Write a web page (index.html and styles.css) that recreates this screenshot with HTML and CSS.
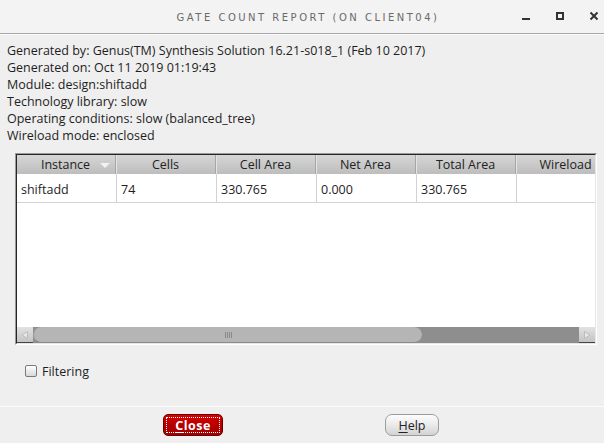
FILE: index.html
```html
<!DOCTYPE html>
<html>
<head>
<meta charset="utf-8">
<link rel="stylesheet" href="styles.css">
</head>
<body>
<div class="window">
  <div class="titlebar">
    <div class="title">Gate Count Report (on client04)</div>
    <div class="controls">
      <svg class="ctl" width="10" height="10" viewBox="0 0 10 10"><rect x="1" y="7" width="8" height="2" fill="#333"/></svg>
      <svg class="ctl" width="10" height="10" viewBox="0 0 10 10"><rect x="2" y="2" width="6" height="6" fill="none" stroke="#333" stroke-width="2"/></svg>
      <svg class="ctl" width="10" height="10" viewBox="0 0 10 10"><path d="M1.5 1.5 L8.5 8.5 M8.5 1.5 L1.5 8.5" stroke="#333" stroke-width="2"/></svg>
    </div>
  </div>
  <div class="info">
    <div>Generated by: Genus(TM) Synthesis Solution 16.21-s018_1 (Feb 10 2017)</div>
    <div>Generated on: Oct 11 2019 01:19:43</div>
    <div>Module: design:shiftadd</div>
    <div>Technology library: slow</div>
    <div>Operating conditions: slow (balanced_tree)</div>
    <div>Wireload mode: enclosed</div>
  </div>
  <div class="frame">
    <div class="frame-inner">
      <div class="viewport">
        <div class="grid">
          <div class="th sorted">Instance<span class="arrow"></span></div>
          <div class="th">Cells</div>
          <div class="th">Cell Area</div>
          <div class="th">Net Area</div>
          <div class="th">Total Area</div>
          <div class="th">Wireload</div>
          <div class="td">shiftadd</div>
          <div class="td">74</div>
          <div class="td">330.765</div>
          <div class="td">0.000</div>
          <div class="td">330.765</div>
          <div class="td"></div>
        </div>
      </div>
      <div class="hscroll">
        <div class="sbtn"><svg width="10" height="10" viewBox="0 0 10 10"><path d="M7.5 1.5 L2 5 L7.5 8.5 Z" fill="#e8e8e8" stroke="#bcbcbc"/></svg></div>
        <div class="track">
          <div class="thumb"><span class="grip"></span></div>
        </div>
        <div class="sbtn"><svg width="10" height="10" viewBox="0 0 10 10"><path d="M2.5 1.5 L8 5 L2.5 8.5 Z" fill="#e8e8e8" stroke="#bcbcbc"/></svg></div>
      </div>
    </div>
  </div>
  <div class="filter">
    <span class="checkbox"></span>
    <span>Filtering</span>
  </div>
  <div class="footer">
    <button class="btn close"><span class="focus"><u>C</u>lose</span></button>
    <button class="btn help"><u>H</u>elp</button>
  </div>
</div>
</body>
</html>
```

FILE: styles.css
```css
html, body {
  margin: 0;
  padding: 0;
}
body {
  width: 604px;
  height: 443px;
  overflow: hidden;
  background: #efefef;
  font-family: "Open Sans", "DejaVu Sans", sans-serif;
  font-size: 12.5px;
  color: #1e1e1e;
}
.window {
  display: flex;
  flex-direction: column;
  height: 443px;
}
.titlebar {
  height: 33px;
  background: #f3f3f3;
  border-bottom: 1px solid #a8a8a8;
  box-shadow: 0 1px 0 #fafafa;
  display: flex;
  align-items: center;
  position: relative;
}
.title {
  flex: 1;
  text-align: center;
  font-family: "DejaVu Sans", sans-serif;
  text-transform: uppercase;
  font-size: 10px;
  letter-spacing: 2.5px;
  color: #6a6a6a;
  padding-left: 12px;
  padding-top: 1px;
}
.controls {
  position: absolute;
  right: 5px;
  top: 11px;
  display: flex;
  gap: 24px;
}
.ctl { display: block; }
.info {
  padding: 8px 7px 0 7px;
  line-height: 17px;
}
.frame {
  margin: 9px 0 0 15px;
  width: 580px;
  border: 1px solid;
  border-color: #9a9a9a #ffffff #ffffff #9a9a9a;
}
.frame-inner {
  border: 1px solid;
  border-color: #262626 #e6e6e6 #e6e6e6 #262626;
  background: #fff;
}
.viewport {
  height: 172px;
  overflow: hidden;
}
.grid {
  display: grid;
  grid-template-columns: repeat(6, 100px);
  grid-template-rows: 19px 29px;
  width: 600px;
  font-size: 12.5px;
}
.th {
  background: linear-gradient(#d6d6d6, #bdbdbd);
  border-right: 1px solid #e4e4e4;
  box-shadow: inset -1px 0 0 #a6a6a6;
  text-align: center;
  line-height: 19px;
  color: #222;
  position: relative;
  padding-right: 2px;
}
.th.sorted .arrow {
  position: absolute;
  right: 6px;
  top: 8px;
  width: 0;
  height: 0;
  border-left: 5px solid transparent;
  border-right: 5px solid transparent;
  border-top: 5px solid #f2f2f2;
}
.td {
  border-right: 1px solid #d2d2d2;
  border-bottom: 1px solid #d2d2d2;
  padding: 3px 0 0 4px;
  line-height: 25px;
  color: #1e1e1e;
}
.hscroll {
  height: 16px;
  display: flex;
  background: #8e8e8e;
}
.sbtn {
  width: 16px;
  height: 16px;
  background: linear-gradient(#e2e2e2, #c4c4c4);
  border-bottom: 1px solid #444;
  box-sizing: border-box;
  display: flex;
  align-items: center;
  justify-content: center;
}
.track {
  flex: 1;
  display: flex;
  align-items: stretch;
}
.thumb {
  width: 389px;
  height: 16px;
  box-sizing: border-box;
  background: #b5b5b5;
  border-radius: 8px;
  border-bottom: 1px solid #8a8a8a;
  border-left: 1px solid #9a9a9a;
  display: flex;
  align-items: center;
  justify-content: center;
}
.grip {
  width: 7px;
  height: 6px;
  background: repeating-linear-gradient(90deg, #8a8a8a 0 1px, transparent 1px 2px);
}
.filter {
  margin: 20px 0 0 25px;
  display: flex;
  align-items: center;
  gap: 5px;
  height: 12px;
}
.checkbox {
  width: 10px;
  height: 10px;
  border: 1px solid #7a7a7a;
  border-radius: 2px;
  background: linear-gradient(#ffffff, #d8d8d8);
}
.footer {
  margin-top: auto;
  height: 36px;
  border-top: 1px solid #fafafa;
  display: flex;
  align-items: center;
  padding-left: 163px;
  gap: 162px;
}
.btn {
  height: 22px;
  font-family: "Open Sans", "DejaVu Sans", sans-serif;
  font-size: 12.5px;
  padding: 0;
  margin: 0;
  box-sizing: border-box;
}
.btn u { text-decoration-thickness: 1px; text-underline-offset: 2px; }
.close {
  width: 60px;
  border: 1px solid #6a0000;
  border-radius: 5px;
  background: linear-gradient(#d80000, #b30000 55%, #a00000);
  color: #fff;
  font-weight: bold;
  padding: 2px;
}
.close .focus {
  display: flex;
  align-items: center;
  justify-content: center;
  height: 100%;
  border: 1px dotted #fff;
  box-sizing: border-box;
  letter-spacing: 0.5px;
}
.help {
  width: 54px;
  border: 1px solid #9c9c9c;
  border-radius: 7px;
  background: linear-gradient(#fdfdfd, #eaeaea 50%, #d3d3d3);
  color: #222;
}
```
